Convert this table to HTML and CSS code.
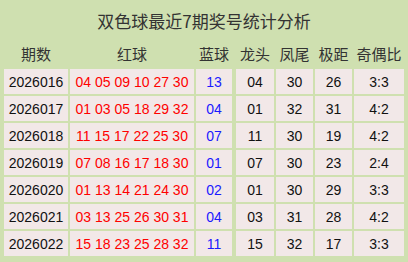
FILE: index.html
```html
<!DOCTYPE html>
<html lang="zh">
<head>
<meta charset="utf-8">
<link rel="stylesheet" href="styles.css">
</head>
<body>
<div class="board">
  <div class="title">双色球最近7期奖号统计分析</div>
  <div class="grid">
    <div class="hd">期数</div><div class="hd">红球</div><div class="hd blue-col">蓝球</div><div class="hd">龙头</div><div class="hd">凤尾</div><div class="hd">极距</div><div class="hd">奇偶比</div>

    <div class="c">2026016</div><div class="c red">04 05 09 10 27 30</div><div class="c blue blue-col">13</div><div class="c">04</div><div class="c">30</div><div class="c">26</div><div class="c">3:3</div>
    <div class="c">2026017</div><div class="c red">01 03 05 18 29 32</div><div class="c blue blue-col">04</div><div class="c">01</div><div class="c">32</div><div class="c">31</div><div class="c">4:2</div>
    <div class="c">2026018</div><div class="c red">11 15 17 22 25 30</div><div class="c blue blue-col">07</div><div class="c">11</div><div class="c">30</div><div class="c">19</div><div class="c">4:2</div>
    <div class="c">2026019</div><div class="c red">07 08 16 17 18 30</div><div class="c blue blue-col">01</div><div class="c">07</div><div class="c">30</div><div class="c">23</div><div class="c">2:4</div>
    <div class="c">2026020</div><div class="c red">01 13 14 21 24 30</div><div class="c blue blue-col">02</div><div class="c">01</div><div class="c">30</div><div class="c">29</div><div class="c">3:3</div>
    <div class="c">2026021</div><div class="c red">03 13 25 26 30 31</div><div class="c blue blue-col">04</div><div class="c">03</div><div class="c">31</div><div class="c">28</div><div class="c">4:2</div>
    <div class="c">2026022</div><div class="c red">15 18 23 25 28 32</div><div class="c blue blue-col">11</div><div class="c">15</div><div class="c">32</div><div class="c">17</div><div class="c">3:3</div>
  </div>
</div>
</body>
</html>
```

FILE: styles.css
```css
html, body {
  margin: 0;
  padding: 0;
  background: #cfe0b0;
}
.board {
  width: 408px;
  height: 262px;
  box-sizing: border-box;
  padding: 0 4px;
  background: #cfe0b0;
}
.title {
  height: 40px;
  line-height: 42px;
  text-align: center;
  font-family: "Noto Sans CJK SC", "Liberation Sans", sans-serif;
  font-size: 17px;
  color: #333;
}
.grid {
  display: grid;
  grid-template-columns: 64px 124px 38px 38px 37px 37px 50px;
  grid-template-rows: 27px repeat(7, 25px);
  column-gap: 2px;
  row-gap: 2px;
}
.hd {
  display: flex;
  align-items: center;
  justify-content: center;
  font-family: "Noto Sans CJK SC", "Liberation Sans", sans-serif;
  font-size: 15px;
  color: #333;
}
.c {
  display: flex;
  align-items: center;
  justify-content: center;
  background: #f2e8e8;
  font-family: "Liberation Sans", Arial, sans-serif;
  font-size: 14px;
  color: #111;
}
.blue-col {
  border-right: 2px solid #cfe0b0;
}
.red {
  color: #ff0000;
}
.blue {
  color: #1a1aff;
}
```
